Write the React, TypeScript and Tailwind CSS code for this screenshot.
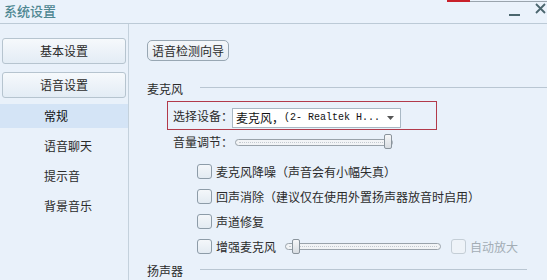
import React from 'react';

const cjk = "font-['Noto_Sans_CJK_SC',sans-serif]";

function Checkbox({ label, disabled }: { label: string; disabled?: boolean }) {
  return (
    <div className="flex items-center h-[25px]">
      <span
        className={`w-[15px] h-[15px] rounded-[3px] border ${
          disabled ? 'border-[#c4ced6] bg-[#eef3f8]' : 'border-[#8d9ca8] bg-gradient-to-b from-[#f4f7fa] to-[#e3ebf2]'
        }`}
      />
      <span className={`ml-[4px] text-[12px] whitespace-nowrap ${disabled ? 'text-[#a3adb5]' : 'text-[#2b2b2b]'}`}>{label}</span>
    </div>
  );
}

function Track({ width, thumb }: { width: number; thumb: number }) {
  return (
    <div className="relative h-[16px] flex items-center" style={{ width }}>
      <div className="w-full h-[7px] rounded-full border border-[#9aa3ab] bg-[#f2f4f6] flex items-center px-[3px]">
        <div className="w-full border-t border-dotted border-[#c3c9cf]" />
      </div>
      {/* thumb sits over the track */}
      <div
        className="absolute top-0 w-[8px] h-[15px] rounded-[2px] border border-[#8a949c] bg-gradient-to-b from-[#f7f8f9] to-[#d8dde2]"
        style={{ left: thumb }}
      />
    </div>
  );
}

function Section({ title, lineEnd }: { title: string; lineEnd?: number }) {
  return (
    <div className="flex items-center h-[18px]">
      <span className="w-[53px] text-[12px] text-[#2b2b2b]">{title}</span>
      <div className="flex-1 border-t border-[#b9c6d2] mt-[-4px]" style={lineEnd ? { marginRight: lineEnd } : undefined} />
    </div>
  );
}

export default function App() {
  return (
    <div className={`relative w-[547px] h-[280px] overflow-hidden bg-[#e9f1fa] flex flex-col ${cjk}`}>
      {/* stray bits at top right of the crop */}
      <div className="absolute top-0 left-[447px] w-[23px] h-[2px] bg-[#c8202a]" />
      <div className="absolute top-[1px] left-[470px] w-[77px] h-px bg-[#9aa4ad]" />

      {/* Title bar */}
      <div className="h-[26px] flex items-center justify-between border-b border-[#bccad6] bg-[#eaf2fb] pl-[4px] pr-[1px]">
        <span className="text-[13px] font-medium text-[#4e8792] leading-none mt-[-2px]">系统设置</span>
        <div className="flex items-center gap-[15px] text-[#4b666e]">
          <svg width="11" height="4" viewBox="0 0 11 4" className="mt-[6px]">
            <rect x="0" y="1" width="11" height="2" fill="currentColor" />
          </svg>
          <svg width="11" height="11" viewBox="0 0 11 11" className="mt-[-6px]">
            <path d="M1 1L10 10M10 1L1 10" stroke="currentColor" strokeWidth="1.8" fill="none" />
          </svg>
        </div>
      </div>

      <div className="flex flex-1">
        {/* Sidebar */}
        <div className="w-[129px] border-r border-[#c4d1dc] pt-[14px] flex flex-col">
          {['基本设置', '语音设置'].map((t) => (
            <div
              key={t}
              className="mx-[2px] mb-[8px] h-[26px] rounded-[3px] border border-[#b6c4cf] bg-gradient-to-b from-[#f6f9fc] to-[#e3ecf5] flex items-center justify-center text-[12px] text-[#2b2b2b]"
            >
              {t}
            </div>
          ))}
          <div className="mt-[-2px] flex flex-col">
            {['常规', '语音聊天', '提示音', '背景音乐'].map((t, i) => (
              <div
                key={t}
                className={`h-[24px] mb-[6px] pl-[44px] flex items-center text-[12px] ${
                  i === 0 ? 'bg-[#d4e4f6] text-[#111]' : 'text-[#2b2b2b]'
                }`}
              >
                {t}
              </div>
            ))}
          </div>
        </div>

        {/* Main panel */}
        <div className="flex-1 flex flex-col pl-[18px] pt-[16px]">
          <div className="self-start h-[21px] px-[4px] rounded-[5px] border border-[#98a7b3] bg-gradient-to-b from-[#f4f7fa] to-[#e4ebf2] flex items-center text-[12px] text-[#2b2b2b]">
            语音检测向导
          </div>

          <div className="mt-[19px]">
            <Section title="麦克风" />
          </div>

          <div className="mt-[3px] ml-[20px] w-[270px] h-[29px] border border-[#b23a4a] flex items-center pl-[5px]">
            <span className="w-[59px] shrink-0 whitespace-nowrap text-[12px] text-[#2b2b2b]">选择设备：</span>
            <div className="w-[169px] h-[20px] mt-[4px] border border-[#a9b8c4] bg-white flex items-center pl-[3px] pr-[6px]">
              <span className="text-[12px] text-[#111] whitespace-nowrap">麦克风，</span>
              <span className="font-['Liberation_Mono',monospace] text-[10px] text-[#111] flex-1 whitespace-nowrap">(2- Realtek H...</span>
              <svg width="7" height="4" viewBox="0 0 7 4">
                <path d="M0 0H7L3.5 4Z" fill="#555" />
              </svg>
            </div>
          </div>

          <div className="ml-[26px] h-[24px] flex items-center">
            <span className="w-[62px] whitespace-nowrap text-[12px] text-[#2b2b2b]">音量调节：</span>
            <Track width={158} thumb={149} />
          </div>

          <div className="ml-[50px] mt-[5px] flex flex-col">
            <Checkbox label="麦克风降噪（声音会有小幅失真）" />
            <Checkbox label="回声消除（建议仅在使用外置扬声器放音时启用）" />
            <Checkbox label="声道修复" />
            <div className="flex items-center">
              <Checkbox label="增强麦克风" />
              <div className="ml-[9px]">
                <Track width={156} thumb={7} />
              </div>
              <div className="ml-[10px]">
                <Checkbox label="自动放大" disabled />
              </div>
            </div>
          </div>

          <div className="mt-[3px]">
            <Section title="扬声器" lineEnd={20} />
          </div>
        </div>
      </div>
    </div>
  );
}
